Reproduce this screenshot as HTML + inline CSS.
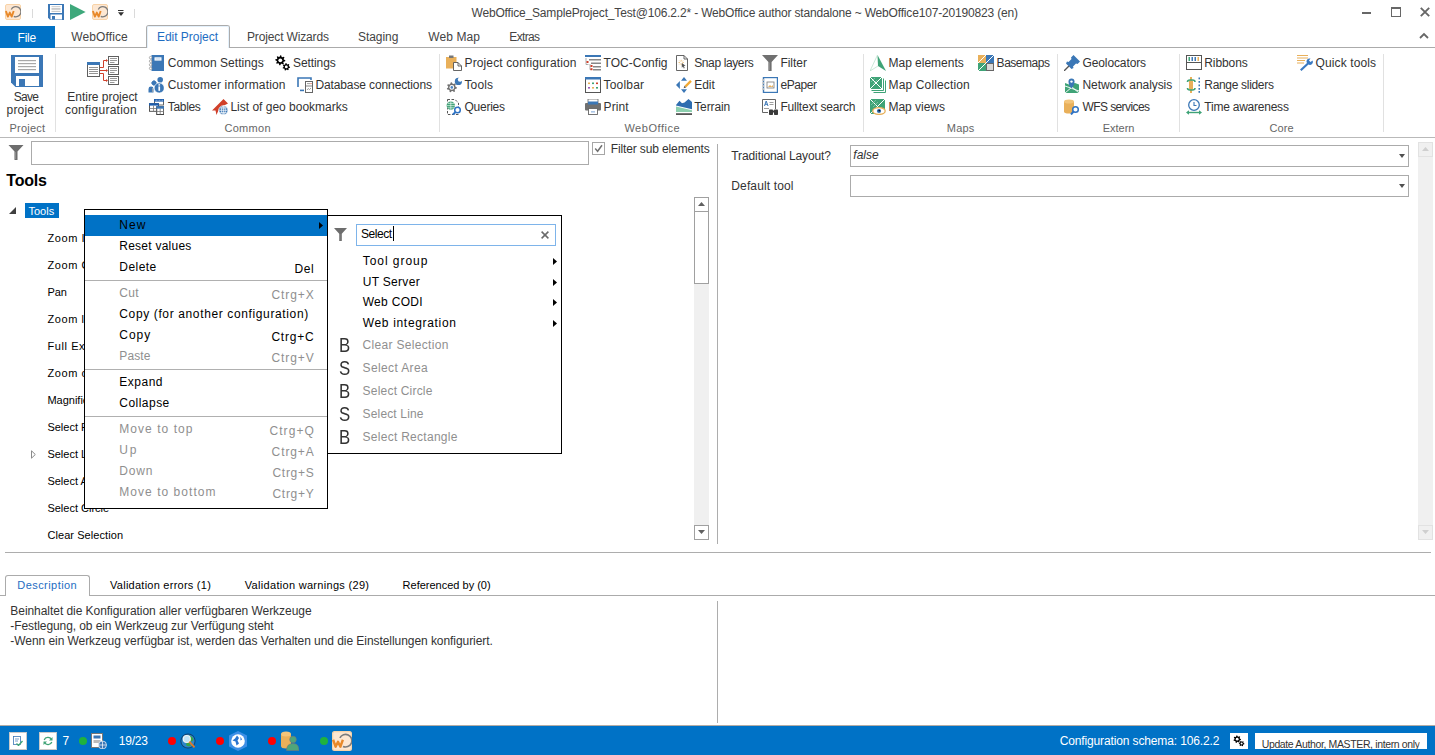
<!DOCTYPE html>
<html><head><meta charset="utf-8"><style>
html,body{margin:0;padding:0;}
body{width:1435px;height:755px;position:relative;overflow:hidden;background:#fff;font-family:'Liberation Sans',sans-serif;}
.a{position:absolute;}
.t{white-space:pre;}
</style></head><body>
<div class="a" style="left:32px;top:9px;width:1px;height:9px;background:#dadada;z-index:0;"></div><div class="a" style="left:134px;top:9px;width:1px;height:9px;background:#dadada;z-index:0;"></div><div class="a" style="left:1362px;top:12px;width:9px;height:2px;background:#676767;z-index:0;"></div><div class="a" style="left:1391px;top:7px;width:10px;height:10px;border:1px solid #676767;box-sizing:border-box;z-index:0;border-top-width:2px;"></div><svg class="a" style="left:1420px;top:7px;z-index:2" width="10" height="10" viewBox="0 0 10 10"><path d="M0.8 0.8L9.2 9.2M9.2 0.8L0.8 9.2" stroke="#676767" stroke-width="1.9"/></svg><svg class="a" style="left:1419px;top:32px;z-index:2" width="10" height="7" viewBox="0 0 10 7"><path d="M1 6L5 2L9 6" stroke="#676767" stroke-width="1.8" fill="none"/></svg><svg class="a" style="left:5px;top:4px;z-index:2" width="16" height="16" viewBox="0 0 16 16"><rect x="0.5" y="0.5" width="15" height="15" rx="1.5" fill="#fde7d2" stroke="#f8d3a8" stroke-width="1"/><path d="M6.31 5.54A5.05 5.05 0 1 1 8.8 12.36" stroke="#7c7c7c" stroke-width="1.3" fill="none"/><path d="M0.9 7L2.9 12.6L4.8 8.6L6.7 12.6L8.7 7" stroke="#e8892a" stroke-width="1.9" fill="none" stroke-linejoin="round"/></svg><svg class="a" style="left:48px;top:4px;z-index:2" width="16" height="16" viewBox="0 0 32 32"><path d="M0 0H32V32H4.5L0 27.5Z" fill="#3b77b6"/><rect x="4" y="2" width="24" height="16" fill="#fff"/><rect x="7" y="5" width="18" height="1.2" fill="#a8a8a8"/><rect x="7" y="8" width="18" height="1.2" fill="#a8a8a8"/><rect x="7" y="11" width="18" height="1.2" fill="#a8a8a8"/><rect x="7" y="14" width="18" height="1.2" fill="#a8a8a8"/><rect x="5" y="21" width="23" height="10" fill="#fff"/><rect x="8" y="24" width="6" height="7" fill="#3b77b6"/></svg><svg class="a" style="left:70px;top:4px;z-index:2" width="16" height="16" viewBox="0 0 16 16"><path d="M0 0L15.6 8L0 16Z" fill="#3ea87b"/></svg><svg class="a" style="left:92px;top:4px;z-index:2" width="16" height="16" viewBox="0 0 16 16"><rect x="0.5" y="0.5" width="15" height="15" rx="1.5" fill="#fde7d2" stroke="#f8d3a8" stroke-width="1"/><path d="M6.31 5.54A5.05 5.05 0 1 1 8.8 12.36" stroke="#7c7c7c" stroke-width="1.3" fill="none"/><path d="M0.9 7L2.9 12.6L4.8 8.6L6.7 12.6L8.7 7" stroke="#e8892a" stroke-width="1.9" fill="none" stroke-linejoin="round"/></svg><svg class="a" style="left:118px;top:10px;z-index:2" width="6" height="7" viewBox="0 0 6 7"><rect x="0" y="0" width="5.5" height="1" fill="#333"/><path d="M0 2.2H6L3 6Z" fill="#333"/></svg><div class="a" style="left:0px;top:26px;width:55px;height:22px;background:#0072c6;z-index:0;"></div><div class="a" style="left:55px;top:47px;width:1380px;height:1px;background:#ababab;z-index:0;"></div><div class="a" style="left:146px;top:25px;width:84px;height:23px;background:#fff;border:1px solid #ababab;box-sizing:border-box;z-index:1;border-bottom:none;border-radius:3px 3px 0 0;"></div><div class="a" style="left:147px;top:26px;width:82px;height:22px;background:#fff;border:1px solid #e3f0fb;box-sizing:border-box;z-index:1;border-bottom:none;border-radius:2px 2px 0 0;"></div><div class="a" style="left:0px;top:137px;width:1435px;height:1px;background:#b9b9b9;z-index:0;"></div><div class="a" style="left:55px;top:54px;width:1px;height:78px;background:#e1e1e1;z-index:0;"></div><div class="a" style="left:439px;top:54px;width:1px;height:78px;background:#e1e1e1;z-index:0;"></div><div class="a" style="left:863px;top:54px;width:1px;height:78px;background:#e1e1e1;z-index:0;"></div><div class="a" style="left:1057px;top:54px;width:1px;height:78px;background:#e1e1e1;z-index:0;"></div><div class="a" style="left:1179px;top:54px;width:1px;height:78px;background:#e1e1e1;z-index:0;"></div><div class="a" style="left:1383px;top:54px;width:1px;height:78px;background:#e1e1e1;z-index:0;"></div><svg class="a" style="left:11px;top:55px;z-index:2" width="32" height="32" viewBox="0 0 32 32"><path d="M0 0H32V32H4.5L0 27.5Z" fill="#3b77b6"/><rect x="4" y="2" width="24" height="16" fill="#fff"/><rect x="7" y="5" width="18" height="1.2" fill="#a8a8a8"/><rect x="7" y="8" width="18" height="1.2" fill="#a8a8a8"/><rect x="7" y="11" width="18" height="1.2" fill="#a8a8a8"/><rect x="7" y="14" width="18" height="1.2" fill="#a8a8a8"/><rect x="5" y="21" width="23" height="10" fill="#fff"/><rect x="8" y="24" width="6" height="7" fill="#3b77b6"/></svg><svg class="a" style="left:84px;top:52px;z-index:2" width="38" height="36" viewBox="0 0 38 36"><rect x="3.5" y="10.5" width="12" height="14" fill="#fff" stroke="#5f5f5f" stroke-width="1"/><rect x="3" y="10" width="13" height="3" fill="#3b77b6"/><rect x="5" y="15" width="9" height="0.9" fill="#8a8a8a"/><rect x="5" y="17" width="9" height="0.9" fill="#8a8a8a"/><rect x="5" y="19" width="9" height="0.9" fill="#8a8a8a"/><rect x="5" y="21" width="9" height="0.9" fill="#8a8a8a"/><rect x="24.5" y="4.5" width="10" height="8" fill="#fff" stroke="#5f5f5f" stroke-width="1"/><rect x="26" y="6" width="7" height="1" fill="#9a9a9a"/><rect x="26" y="8" width="7" height="1" fill="#9a9a9a"/><rect x="26" y="10" width="4.5" height="1" fill="#9a9a9a"/><rect x="24.5" y="14.5" width="10" height="8" fill="#fff" stroke="#5f5f5f" stroke-width="1"/><rect x="26" y="16" width="7" height="1" fill="#9a9a9a"/><rect x="26" y="18" width="7" height="1" fill="#9a9a9a"/><rect x="26" y="20" width="4.5" height="1" fill="#9a9a9a"/><rect x="24.5" y="24.5" width="10" height="8" fill="#fff" stroke="#5f5f5f" stroke-width="1"/><rect x="26" y="26" width="7" height="1" fill="#9a9a9a"/><rect x="26" y="28" width="7" height="1" fill="#9a9a9a"/><rect x="26" y="30" width="4.5" height="1" fill="#9a9a9a"/><path d="M16 15.5H19.5V8.5H23M16 18.5H23M16 21.5H19.5V28.5H23" stroke="#d0402a" stroke-width="1" fill="none"/><path d="M22 7L24 8.5L22 10ZM22 17L24 18.5L22 20ZM22 27L24 28.5L22 30Z" fill="#d0402a"/></svg><svg class="a" style="left:148px;top:55px;z-index:2" width="16" height="16" viewBox="0 0 16 16"><rect x="3.5" y="0" width="12.5" height="16" fill="#3b77b6"/><rect x="6.5" y="2.3" width="7" height="3.3" fill="#fff"/><rect x="7.5" y="3.2" width="5" height="1.5" fill="#cfe0f2"/><circle cx="2.6" cy="2.6" r="1.25" fill="#fff" stroke="#8d8d8d" stroke-width="0.7"/><circle cx="2.6" cy="6.2" r="1.25" fill="#fff" stroke="#8d8d8d" stroke-width="0.7"/><circle cx="2.6" cy="9.8" r="1.25" fill="#fff" stroke="#8d8d8d" stroke-width="0.7"/><circle cx="2.6" cy="13.4" r="1.25" fill="#fff" stroke="#8d8d8d" stroke-width="0.7"/></svg><svg class="a" style="left:148px;top:77px;z-index:2" width="16" height="16" viewBox="0 0 16 16"><circle cx="12.2" cy="2.8" r="2.8" fill="#3b77b6"/><path d="M6 3L9 6L6 9L3 6Z" fill="#3b77b6"/><circle cx="6" cy="6" r="2.3" fill="#3b77b6"/><path d="M0.5 15.5V12Q0.5 9.6 3 9.6Q5.5 9.6 5.5 12V15.5Z" fill="#3b77b6"/><rect x="4.2" y="11" width="0.8" height="4" fill="#aaa"/><circle cx="11.2" cy="11" r="5" fill="#3b77b6" stroke="#fff" stroke-width="0.6"/><rect x="10.4" y="9.4" width="1.7" height="4.4" fill="#fff"/><rect x="10.4" y="7.2" width="1.7" height="1.4" fill="#fff"/></svg><svg class="a" style="left:148px;top:99px;z-index:2" width="16" height="16" viewBox="0 0 16 16"><rect x="6.5" y="0.5" width="9" height="5.5" fill="#fff" stroke="#555" stroke-width="0.9"/><rect x="6" y="0" width="10" height="2.6" fill="#1f5fae"/><path d="M7.5 1.3H9.5M10.5 1.3H12.5M13.5 1.3H15" stroke="#fff" stroke-width="0.5"/><rect x="1.5" y="4.7" width="9" height="7.6" fill="#fff" stroke="#444" stroke-width="0.9"/><rect x="1" y="4.2" width="10" height="2.4" fill="#1f5fae"/><path d="M5.5 6.6V12.3M1.5 9.5H10.5" stroke="#777" stroke-width="0.8"/><rect x="8.7" y="7.7" width="7" height="7.8" fill="#fff" stroke="#444" stroke-width="1"/><rect x="8.2" y="7.2" width="7.8" height="2.5" fill="#3b77b6"/><path d="M12.2 9.7V15.3M8.7 12.5H15.7" stroke="#777" stroke-width="0.8"/></svg><svg class="a" style="left:275px;top:55px;z-index:2" width="16" height="16" viewBox="0 0 16 16"><polygon points="10.30,5.30 10.20,6.28 8.63,6.68 8.29,7.30 8.84,8.84 8.08,9.46 6.68,8.63 6.00,8.83 5.30,10.30 4.32,10.20 3.92,8.63 3.30,8.29 1.76,8.84 1.14,8.08 1.97,6.68 1.77,6.00 0.30,5.30 0.40,4.32 1.97,3.92 2.31,3.30 1.76,1.76 2.52,1.14 3.92,1.97 4.60,1.77 5.30,0.30 6.28,0.40 6.68,1.97 7.30,2.31 8.84,1.76 9.46,2.52 8.63,3.92 8.83,4.60" fill="#000"/><circle cx="5.3" cy="5.3" r="1.90" fill="#fff"/><polygon points="15.10,11.90 15.00,12.75 13.77,13.09 13.44,13.61 13.67,14.87 12.95,15.32 11.91,14.57 11.30,14.64 10.45,15.60 9.65,15.32 9.59,14.04 9.16,13.61 7.88,13.55 7.60,12.75 8.56,11.90 8.63,11.29 7.88,10.25 8.33,9.53 9.59,9.76 10.11,9.43 10.45,8.20 11.30,8.10 11.91,9.23 12.49,9.43 13.67,8.93 14.27,9.53 13.77,10.71 13.97,11.29" fill="#000"/><circle cx="11.3" cy="11.9" r="1.44" fill="#fff"/></svg><svg class="a" style="left:297px;top:77px;z-index:2" width="16" height="16" viewBox="0 0 16 16"><path d="M1 10V1H14V3" stroke="#3b77b6" stroke-width="1.6" fill="none"/><rect x="3" y="12.6" width="4" height="1.6" fill="#3b77b6"/><rect x="8.5" y="4.5" width="7" height="11" fill="#fff" stroke="#666" stroke-width="1"/><path d="M8.5 9H15.5" stroke="#666" stroke-width="0.8"/><rect x="10" y="6.3" width="3" height="0.8" fill="#888"/><circle cx="14" cy="6.6" r="0.6" fill="#d0402a"/><path d="M10 13L11.3 11.5L12.5 12.5L14 11" stroke="#777" stroke-width="0.7" fill="none"/></svg><svg class="a" style="left:212px;top:99px;z-index:2" width="16" height="16" viewBox="0 0 16 16"><path d="M0 11.5L11.5 0L16 4.5L11 7L7 10L4.5 16L3.5 11.5Z" fill="#d0402a"/><circle cx="11.4" cy="11.3" r="4.6" fill="#3b77b6" stroke="#fff" stroke-width="0.8"/><path d="M7.2 11.3H15.6M11.4 6.9V15.7M8.2 9H14.6M8.2 13.6H14.6" stroke="#fff" stroke-width="0.7"/><ellipse cx="11.4" cy="11.3" rx="2" ry="4.3" stroke="#fff" stroke-width="0.7" fill="none"/></svg><svg class="a" style="left:446px;top:55px;z-index:2" width="16" height="16" viewBox="0 0 16 16"><rect x="0" y="2" width="10.5" height="11.5" fill="#e9b05a"/><rect x="3" y="0.5" width="4.5" height="2.5" fill="#777"/><path d="M7.5 7.5H12L15.5 11V15.5H7.5Z" fill="#fff" stroke="#555" stroke-width="0.9"/><path d="M12 7.5V11H15.5" stroke="#555" stroke-width="0.9" fill="none"/></svg><svg class="a" style="left:446px;top:77px;z-index:2" width="16" height="16" viewBox="0 0 16 16"><polygon points="10.90,10.40 10.77,11.53 9.11,11.99 8.67,12.69 8.98,14.39 8.01,14.99 6.62,13.98 5.80,14.07 4.67,15.37 3.59,14.99 3.51,13.27 2.93,12.69 1.21,12.61 0.83,11.53 2.13,10.40 2.22,9.58 1.21,8.19 1.81,7.22 3.51,7.53 4.21,7.09 4.67,5.43 5.80,5.30 6.62,6.82 7.39,7.09 8.98,6.41 9.79,7.22 9.11,8.81 9.38,9.58" fill="#6f6f6f"/><circle cx="5.8" cy="10.4" r="2.40" fill="#fff"/><circle cx="5.8" cy="10.4" r="1.3" fill="#4c84c0"/><circle cx="12.4" cy="4.4" r="3.6" fill="#3b77b6"/><circle cx="14" cy="2.6" r="2.2" fill="#fff"/></svg><svg class="a" style="left:446px;top:99px;z-index:2" width="16" height="16" viewBox="0 0 16 16"><path d="M1.5 0.5H9L12.5 4V15.5H1.5Z" fill="#fff" stroke="#444" stroke-width="0.9" stroke-dasharray="2.5 1.5"/><circle cx="4.8" cy="6.6" r="4.2" fill="#3fa377"/><path d="M0.6 6.6H9M4.8 2.4V10.8M1.4 4.4H8.2M1.4 8.8H8.2" stroke="#fff" stroke-width="0.6"/><circle cx="11.5" cy="11" r="2.8" fill="#fff" stroke="#2f73c4" stroke-width="1.5"/><path d="M9.5 13L6.8 15.7" stroke="#2f73c4" stroke-width="2"/></svg><svg class="a" style="left:585px;top:55px;z-index:2" width="16" height="16" viewBox="0 0 16 16"><rect x="0" y="0" width="16" height="2" fill="#3b77b6"/><rect x="4" y="4" width="12" height="1.5" fill="#888"/><rect x="6" y="7.5" width="10" height="1.5" fill="#888"/><rect x="8" y="11" width="8" height="1.5" fill="#888"/><rect x="8" y="14" width="8" height="1.5" fill="#888"/><path d="M1 3V9.5H3.5M5 9V14.6H7" stroke="#777" stroke-width="0.6" fill="none"/><rect x="1.5" y="6" width="2" height="2" fill="#d0402a"/><rect x="5.5" y="10" width="2" height="2" fill="#d0402a"/><rect x="5.5" y="13.2" width="2" height="2" fill="#d0402a"/></svg><svg class="a" style="left:585px;top:77px;z-index:2" width="16" height="16" viewBox="0 0 16 16"><rect x="0.5" y="0.5" width="15" height="15" fill="#fff" stroke="#555" stroke-width="1"/><rect x="0" y="0" width="16" height="2.5" fill="#3b77b6"/><rect x="3" y="5.5" width="2" height="1.6" fill="#e9b05a"/><rect x="7" y="5.5" width="2" height="1.6" fill="#3fa377"/><rect x="11" y="5.5" width="2" height="1.6" fill="#d0402a"/><rect x="3" y="10" width="2" height="1.6" fill="#9b59b6"/><rect x="7" y="10" width="2" height="1.6" fill="#e9b05a"/><rect x="11" y="10" width="2" height="1.6" fill="#3fa377"/></svg><svg class="a" style="left:585px;top:99px;z-index:2" width="16" height="16" viewBox="0 0 16 16"><rect x="3" y="0" width="10" height="4" fill="#fff" stroke="#666" stroke-width="0.8"/><rect x="0" y="4" width="16" height="7.5" rx="1" fill="#707070"/><rect x="3" y="2.5" width="10" height="3" fill="#3b77b6"/><rect x="3.5" y="9.5" width="9" height="6" fill="#fff" stroke="#666" stroke-width="0.9"/><rect x="6" y="12.5" width="4" height="0.8" fill="#5a8fd0"/></svg><svg class="a" style="left:676px;top:55px;z-index:2" width="16" height="16" viewBox="0 0 16 16"><path d="M0.5 0.5H8L11.5 4V15.5H0.5Z" fill="#fff" stroke="#555" stroke-width="0.9"/><path d="M8 0.5V4H11.5" stroke="#555" stroke-width="0.9" fill="none"/><path d="M5.2 4.8V6.3M5.2 8.7V10.2M2.5 7.5H4M6.4 7.5H7.9M3.3 5.6L4.2 6.5M6.2 8.5L7.1 9.4M3.3 9.4L4.2 8.5M6.2 6.5L7.1 5.6" stroke="#e9b05a" stroke-width="0.7"/><path d="M5.8 8L9.6 10.8L7.9 11.1L8.7 13.1L7.8 13.5L7 11.5L5.8 12.8Z" fill="#555"/></svg><svg class="a" style="left:676px;top:77px;z-index:2" width="16" height="16" viewBox="0 0 16 16"><path d="M5 3.8L8 0L11 3.8Z" fill="#3b77b6"/><path d="M5 12.2L8 16L11 12.2Z" fill="#3b77b6"/><path d="M0 8L3.9 4V12Z" fill="#3b77b6"/><path d="M8.5 8.8L14.2 3.1L15.8 4.7L10.1 10.4Z" fill="#f2a933"/><path d="M8.5 8.8L10.1 10.4L7.6 11.3Z" fill="#555"/></svg><svg class="a" style="left:676px;top:99px;z-index:2" width="16" height="16" viewBox="0 0 16 16"><path d="M0 6L3.5 1.8L6 4.2L8.5 3.5L12.5 0L16 3V10.3L0 6.6Z" fill="#2f6db0"/><path d="M0 7.6L16 11.2V13H0Z" fill="#8ccfae"/><rect x="0" y="14.2" width="16" height="1.8" fill="#555"/></svg><svg class="a" style="left:762px;top:55px;z-index:2" width="16" height="16" viewBox="0 0 16 16"><path d="M0 0H16L9.6 7V16H6.4V7Z" fill="#707070"/><path d="M7.2 7.5V15" stroke="#9a9a9a" stroke-width="0.9"/></svg><svg class="a" style="left:762px;top:77px;z-index:2" width="16" height="16" viewBox="0 0 16 16"><rect x="1.5" y="0.5" width="14" height="15" fill="#fff" stroke="#3b77b6" stroke-width="1.4"/><rect x="5" y="5" width="7" height="6" fill="#fff" stroke="#777" stroke-width="0.8"/><path d="M6 10L8 8L9.5 9.5L11 8V10Z" fill="#e9b05a"/><circle cx="1" cy="3" r="0.9" fill="#fff" stroke="#999" stroke-width="0.5"/><circle cx="1" cy="6" r="0.9" fill="#fff" stroke="#999" stroke-width="0.5"/><circle cx="1" cy="9" r="0.9" fill="#fff" stroke="#999" stroke-width="0.5"/><circle cx="1" cy="12" r="0.9" fill="#fff" stroke="#999" stroke-width="0.5"/></svg><svg class="a" style="left:762px;top:99px;z-index:2" width="16" height="16" viewBox="0 0 16 16"><path d="M0.5 0.5H13.5V10M0.5 0.5V13.5H6" stroke="#555" stroke-width="0.9" fill="#fff"/><path d="M2.5 7L4.2 2L6 7M3.1 5.3H5.3" stroke="#3b77b6" stroke-width="1" fill="none"/><rect x="7.5" y="3" width="4" height="0.8" fill="#888"/><rect x="7.5" y="5" width="4" height="0.8" fill="#888"/><rect x="2" y="9" width="5" height="0.8" fill="#888"/><rect x="7" y="10.5" width="4" height="5.5" rx="0.8" fill="#3a3a3a"/><rect x="12" y="10.5" width="4" height="5.5" rx="0.8" fill="#3a3a3a"/><rect x="10" y="11.5" width="3" height="2" fill="#3a3a3a"/></svg><svg class="a" style="left:870px;top:55px;z-index:2" width="16" height="16" viewBox="0 0 16 16"><path d="M7.5 0L16 16L8 11Z" fill="#3fa377"/><path d="M7.5 0L0 16L8 11" stroke="#a8d8c0" stroke-width="0.6" fill="none"/></svg><svg class="a" style="left:870px;top:77px;z-index:2" width="16" height="16" viewBox="0 0 16 16"><path d="M13.5 1.5V13.5H1.5M15.5 3.5V15.5H3.5" stroke="#3fa377" stroke-width="1" fill="none"/><rect x="0" y="0" width="12" height="12" fill="#3fa377"/><path d="M0 0L12 12M12 0L0 12" stroke="#fff" stroke-width="1"/><path d="M1 5L5 1M3 7L7 3" stroke="#9fd4bb" stroke-width="0.6"/></svg><svg class="a" style="left:870px;top:99px;z-index:2" width="16" height="16" viewBox="0 0 16 16"><rect x="0" y="0" width="15" height="15" fill="#3fa377"/><path d="M0 0L15 15M15 0L0 15" stroke="#fff" stroke-width="1"/><path d="M1 6L6 1M3 8L8 3" stroke="#9fd4bb" stroke-width="0.6"/><ellipse cx="9" cy="12" rx="6.2" ry="3.4" fill="#fff" stroke="#e9b05a" stroke-width="1.3"/><circle cx="9" cy="12" r="2.1" fill="#2f6db0"/><circle cx="9.3" cy="11.6" r="0.9" fill="#111"/></svg><svg class="a" style="left:978px;top:55px;z-index:2" width="16" height="16" viewBox="0 0 16 16"><rect x="0" y="0" width="8" height="8" fill="#e9b05a"/><rect x="8" y="0" width="8" height="8" fill="#3b77b6"/><path d="M0 8H8V16H0Z" fill="#3fa377"/><rect x="8.5" y="8.5" width="7" height="7" fill="#d8d8d8" stroke="#666" stroke-width="1"/><path d="M8 0L0 8M16 0L8 8M8 8L0 16" stroke="#fff" stroke-width="1"/></svg><svg class="a" style="left:1064px;top:55px;z-index:2" width="16" height="16" viewBox="0 0 16 16"><path d="M7 2.5L9.5 0L16 6.5L13.5 9L12 8.5L9 11.5L9.5 13L7.5 14L2 8.5L3 6.5L4.5 7L7.5 4Z" fill="#3b77b6"/><path d="M5 11L0 16" stroke="#555" stroke-width="1.3"/></svg><svg class="a" style="left:1064px;top:77px;z-index:2" width="16" height="16" viewBox="0 0 16 16"><path d="M1 6L5 7.5L11 6L15 7.5V16H1Z" fill="#3fa377"/><path d="M1 16L8 10L15 16M1 9L15 14" stroke="#fff" stroke-width="0.9" fill="none"/><path d="M7.5 11.5C5 8.5 4.5 6.5 4.5 4.5A3 3 0 0 1 10.5 4.5C10.5 6.5 10 8.5 7.5 11.5Z" fill="#3b77b6"/><circle cx="7.5" cy="4.6" r="1.2" fill="#fff"/></svg><svg class="a" style="left:1064px;top:99px;z-index:2" width="16" height="16" viewBox="0 0 16 16"><path d="M0 2.5V12.5A5 2 0 0 0 10 12.5V2.5Z" fill="#e9b05a"/><ellipse cx="5" cy="2.5" rx="5" ry="2" fill="#f3c57c"/><circle cx="11.5" cy="10.5" r="2.8" fill="#fff" stroke="#2f73c4" stroke-width="1.5"/><path d="M9.5 12.5L7 15.5" stroke="#2f73c4" stroke-width="2"/></svg><svg class="a" style="left:1186px;top:55px;z-index:2" width="16" height="16" viewBox="0 0 16 16"><rect x="0.5" y="0.5" width="15" height="14" fill="#fff" stroke="#555" stroke-width="1"/><path d="M0.5 7.5H15.5" stroke="#555" stroke-width="1"/><rect x="2.5" y="2" width="1.5" height="4" fill="#3fa377"/><rect x="5.5" y="2" width="1.5" height="4" fill="#3b77b6"/><rect x="8.5" y="2" width="1.5" height="4" fill="#3b77b6"/><rect x="11.5" y="2" width="1.5" height="4" fill="#e9b05a"/></svg><svg class="a" style="left:1186px;top:77px;z-index:2" width="16" height="16" viewBox="0 0 16 16"><rect x="4" y="0" width="2" height="16" fill="#e9b05a"/><rect x="3" y="3.5" width="4" height="9" fill="#e9b05a"/><path d="M1.5 5Q1.5 3 4 3H6.5Q9 3 9 5M1.5 11Q1.5 13 4 13H6.5Q9 13 9 11" stroke="#3fa377" stroke-width="1.6" fill="none"/><rect x="12.5" y="0.5" width="1.5" height="1.8" fill="#3b77b6"/><rect x="12.5" y="4" width="1.5" height="1.8" fill="#3b77b6"/><rect x="12.5" y="7.5" width="1.5" height="1.8" fill="#3b77b6"/><rect x="12.5" y="11" width="1.5" height="1.8" fill="#3b77b6"/><rect x="12.5" y="14" width="1.5" height="1.8" fill="#3b77b6"/></svg><svg class="a" style="left:1186px;top:99px;z-index:2" width="16" height="16" viewBox="0 0 16 16"><circle cx="8" cy="6" r="5.3" fill="#fff" stroke="#3b77b6" stroke-width="1.3"/><path d="M8 3V6.5H10.5" stroke="#3b77b6" stroke-width="1.1" fill="none"/><path d="M1.5 13.5H14.5" stroke="#3fa377" stroke-width="1.4"/><path d="M0 13.5L3 11.2V15.8ZM16 13.5L13 11.2V15.8Z" fill="#3fa377"/></svg><svg class="a" style="left:1297px;top:55px;z-index:2" width="16" height="16" viewBox="0 0 16 16"><rect x="0" y="0" width="11" height="1" fill="#e9b05a"/><rect x="0" y="2.5" width="11" height="1" fill="#e9b05a"/><rect x="0" y="5" width="8" height="1" fill="#e9b05a"/><rect x="0" y="7.5" width="7" height="1" fill="#e9b05a"/><path d="M3 14.5L10 8A3 3 0 0 1 13.5 3.6L12 5.5L13.5 7L15.5 5.5A3 3 0 0 1 11.5 9.6L4.5 16Z" fill="#3b7ac2"/></svg><svg class="a" style="left:8px;top:145px;z-index:2" width="16" height="15" viewBox="0 0 16 16"><path d="M0 0H16L9.6 7V16H6.4V7Z" fill="#6d6d6d"/><path d="M7.2 7.5V15" stroke="#9a9a9a" stroke-width="0.9"/></svg><div class="a" style="left:31px;top:141px;width:558px;height:24px;background:#fff;border:1px solid #ababab;box-sizing:border-box;z-index:0;"></div><div class="a" style="left:592px;top:142px;width:13px;height:13px;background:#fff;border:1px solid #a6a6a6;box-sizing:border-box;z-index:0;"></div><svg class="a" style="left:594px;top:144px;z-index:2" width="9" height="9" viewBox="0 0 9 9"><path d="M1.2 4.6L3.6 7.2L8 1.2" stroke="#707070" stroke-width="1.5" fill="none"/></svg><svg class="a" style="left:9px;top:207px;z-index:2" width="7" height="7" viewBox="0 0 7 7"><path d="M7 0L7 7L0 7Z" fill="#404040"/></svg><div class="a" style="left:25px;top:203px;width:34px;height:15px;background:#0072c6;z-index:0;"></div><svg class="a" style="left:31px;top:450px;z-index:2" width="5" height="9" viewBox="0 0 5 9"><path d="M0.5 0.8L4.3 4.5L0.5 8.2Z" fill="none" stroke="#8a8a8a" stroke-width="1"/></svg><div class="a" style="left:694px;top:197px;width:15px;height:343px;background:#f0f0f0;z-index:0;"></div><div class="a" style="left:694px;top:197px;width:15px;height:15px;background:#fff;border:1px solid #a0a0a0;box-sizing:border-box;z-index:0;"></div><svg class="a" style="left:698px;top:202px;z-index:2" width="7" height="4" viewBox="0 0 7 4"><path d="M0 4L3.5 0L7 4Z" fill="#606060"/></svg><div class="a" style="left:694px;top:211px;width:15px;height:73px;background:#fff;border:1px solid #a0a0a0;box-sizing:border-box;z-index:0;"></div><div class="a" style="left:694px;top:525px;width:15px;height:15px;background:#fff;border:1px solid #a0a0a0;box-sizing:border-box;z-index:0;"></div><svg class="a" style="left:698px;top:530px;z-index:2" width="7" height="4" viewBox="0 0 7 4"><path d="M0 0L3.5 4L7 0Z" fill="#606060"/></svg><div class="a" style="left:717px;top:144px;width:1px;height:400px;background:#adadad;z-index:0;"></div><div class="a" style="left:850px;top:145px;width:559px;height:22px;background:#fff;border:1px solid #ababab;box-sizing:border-box;z-index:0;"></div><div class="a" style="left:850px;top:175px;width:559px;height:22px;background:#fff;border:1px solid #ababab;box-sizing:border-box;z-index:0;"></div><svg class="a" style="left:1399px;top:154px;z-index:2" width="6" height="4" viewBox="0 0 6 4"><path d="M0 0L6 0L3 4Z" fill="#505050"/></svg><svg class="a" style="left:1399px;top:184px;z-index:2" width="6" height="4" viewBox="0 0 6 4"><path d="M0 0L6 0L3 4Z" fill="#505050"/></svg><div class="a" style="left:1418px;top:142px;width:15px;height:398px;background:#f0f0f0;z-index:0;"></div><div class="a" style="left:1418px;top:142px;width:15px;height:15px;background:#f0f0f0;border:1px solid #e2e2e2;box-sizing:border-box;z-index:0;"></div><svg class="a" style="left:1422px;top:147px;z-index:2" width="7" height="4" viewBox="0 0 7 4"><path d="M0 4L3.5 0L7 4Z" fill="#cfcfcf"/></svg><div class="a" style="left:1418px;top:525px;width:15px;height:15px;background:#f0f0f0;border:1px solid #e2e2e2;box-sizing:border-box;z-index:0;"></div><svg class="a" style="left:1422px;top:530px;z-index:2" width="7" height="4" viewBox="0 0 7 4"><path d="M0 0L3.5 4L7 0Z" fill="#cfcfcf"/></svg><div class="a" style="left:5px;top:552px;width:1426px;height:1px;background:#adadad;z-index:0;"></div><div class="a" style="left:0px;top:595px;width:1435px;height:1px;background:#ababab;z-index:0;"></div><div class="a" style="left:5px;top:575px;width:85px;height:21px;background:#fff;border:1px solid #ababab;box-sizing:border-box;z-index:1;border-bottom:none;border-radius:3px 3px 0 0;"></div><div class="a" style="left:717px;top:601px;width:1px;height:122px;background:#adadad;z-index:0;"></div><div class="a" style="left:0px;top:725px;width:1435px;height:1px;background:#b3aca6;z-index:0;"></div><div class="a" style="left:0px;top:726px;width:1435px;height:29px;background:#0072c6;z-index:0;"></div><div class="a" style="left:1230px;top:733px;width:18px;height:16px;background:#fff;z-index:1;"></div><div class="a" style="left:1255px;top:733px;width:172px;height:16px;background:#fff;z-index:1;overflow:hidden;"></div><div class="a" style="left:9px;top:732px;width:18px;height:18px;background:#fff;border:1px solid #c9c9c9;box-sizing:border-box;z-index:1;"></div><svg class="a" style="left:13px;top:736px;z-index:2" width="10" height="10" viewBox="0 0 10 10"><rect x="0.5" y="0.5" width="7" height="8" fill="#fff" stroke="#3b77b6" stroke-width="0.8"/><path d="M2 3H6M2 5H5" stroke="#3b77b6" stroke-width="0.7"/><path d="M3.5 7.5L5.5 9.5L9.5 5" stroke="#3fa377" stroke-width="1.3" fill="none"/></svg><div class="a" style="left:39px;top:732px;width:18px;height:18px;background:#fff;border:1px solid #c9c9c9;box-sizing:border-box;z-index:1;"></div><svg class="a" style="left:43px;top:736px;z-index:2" width="10" height="10" viewBox="0 0 10 10"><path d="M8.5 3.5A4 4 0 0 0 1.2 4M1.5 6.5A4 4 0 0 0 8.8 6" stroke="#3fa377" stroke-width="1.3" fill="none"/><path d="M9.5 1V4.5H6Z" fill="#3fa377"/><path d="M0.5 9V5.5H4Z" fill="#3fa377"/></svg><svg class="a" style="left:79px;top:737px;z-index:2" width="8" height="8" viewBox="0 0 8 8"><circle cx="4" cy="4" r="4" fill="#1fb23d"/></svg><svg class="a" style="left:91px;top:733px;z-index:2" width="16" height="16" viewBox="0 0 16 16"><rect x="0.5" y="0.5" width="11" height="14" fill="#fff" stroke="#777" stroke-width="1"/><rect x="2.5" y="2.5" width="7" height="3" fill="#3b77b6"/><rect x="2.5" y="7" width="7" height="3" fill="#bbb"/><circle cx="11.5" cy="12" r="4" fill="#3b77b6" stroke="#fff" stroke-width="0.7"/><path d="M7.8 12H15.2M11.5 8.2V15.8" stroke="#fff" stroke-width="0.7"/></svg><svg class="a" style="left:168px;top:737px;z-index:2" width="8" height="8" viewBox="0 0 8 8"><circle cx="4" cy="4" r="4" fill="#ff0000"/></svg><svg class="a" style="left:216px;top:737px;z-index:2" width="8" height="8" viewBox="0 0 8 8"><circle cx="4" cy="4" r="4" fill="#ff0000"/></svg><svg class="a" style="left:268px;top:737px;z-index:2" width="8" height="8" viewBox="0 0 8 8"><circle cx="4" cy="4" r="4" fill="#ff0000"/></svg><svg class="a" style="left:320px;top:737px;z-index:2" width="8" height="8" viewBox="0 0 8 8"><circle cx="4" cy="4" r="4" fill="#1fb23d"/></svg><svg class="a" style="left:180px;top:733px;z-index:2" width="16" height="16" viewBox="0 0 16 16"><circle cx="8" cy="8" r="7.6" fill="#12406e"/><circle cx="8" cy="8" r="6.6" fill="#2e86c8"/><path d="M9 2.5Q13 3 13.5 7Q12 9 10 8.5Q9 11 11 13Q8 14 6 12Z" fill="#3aa544"/><circle cx="6.8" cy="6" r="3.5" fill="#bfe3f7" stroke="#f2f2f2" stroke-width="1.2"/><path d="M9.3 8.6L14.5 14.3" stroke="#e07b2a" stroke-width="1.9"/></svg><svg class="a" style="left:229px;top:731px;z-index:2" width="18" height="20" viewBox="0 0 18 20"><path d="M9 0L18 4.5V15.5L9 20L0 15.5V4.5Z" fill="#3d8fe6"/><circle cx="9" cy="10" r="6.8" fill="#fff"/><path d="M8 4.5L6 7.5L3.5 9.5L6.5 10.5L7.5 14.5L10 12.5L8.5 9.5L10 7ZM11.5 5.5L13 8.5L11.5 9.5Z" fill="#2a75d0"/></svg><svg class="a" style="left:281px;top:731px;z-index:2" width="18" height="20" viewBox="0 0 18 20"><path d="M0 3V15A5 2.5 0 0 0 10 15V3Z" fill="#e9b05a"/><ellipse cx="5" cy="3" rx="5" ry="2.5" fill="#f2c47a"/><circle cx="12" cy="8.5" r="3.3" fill="#4fa57a" stroke="#777" stroke-width="0.6"/><path d="M5.5 19.5Q5.5 12.5 12 12.5Q18 12.5 18 19.5Z" fill="#4fa57a" stroke="#777" stroke-width="0.6"/></svg><svg class="a" style="left:332px;top:731px;z-index:2" width="20" height="20" viewBox="0 0 16 16"><rect x="0.5" y="0.5" width="15" height="15" rx="1.5" fill="#fde7d2" stroke="#f8d3a8" stroke-width="1"/><path d="M6.31 5.54A5.05 5.05 0 1 1 8.8 12.36" stroke="#7c7c7c" stroke-width="1.3" fill="none"/><path d="M0.9 7L2.9 12.6L4.8 8.6L6.7 12.6L8.7 7" stroke="#e8892a" stroke-width="1.9" fill="none" stroke-linejoin="round"/></svg><svg class="a" style="left:1233px;top:735px;z-index:2" width="12" height="12" viewBox="0 0 12 12"><polygon points="8.00,4.20 7.90,5.05 6.67,5.39 6.34,5.91 6.57,7.17 5.85,7.62 4.81,6.87 4.20,6.94 3.35,7.90 2.55,7.62 2.49,6.34 2.06,5.91 0.78,5.85 0.50,5.05 1.46,4.20 1.53,3.59 0.78,2.55 1.23,1.83 2.49,2.06 3.01,1.73 3.35,0.50 4.20,0.40 4.81,1.53 5.39,1.73 6.57,1.23 7.17,1.83 6.67,3.01 6.87,3.59" fill="#000"/><circle cx="4.2" cy="4.2" r="1.40" fill="#fff"/><polygon points="11.40,8.60 11.30,9.32 10.35,9.61 10.03,10.03 10.00,11.02 9.32,11.30 8.60,10.62 8.08,10.55 7.20,11.02 6.62,10.58 6.85,9.61 6.65,9.12 5.80,8.60 5.90,7.88 6.85,7.59 7.17,7.17 7.20,6.18 7.88,5.90 8.60,6.58 9.12,6.65 10.00,6.18 10.58,6.62 10.35,7.59 10.55,8.08" fill="#000"/><circle cx="8.6" cy="8.6" r="1.00" fill="#fff"/></svg><div class="a" style="left:84px;top:209px;width:244px;height:300px;background:#fff;border:1px solid #000;box-sizing:border-box;z-index:10;"></div><div class="a" style="left:85px;top:215px;width:242px;height:21px;background:#0072c6;z-index:10;"></div><svg class="a" style="left:319px;top:222px;z-index:11" width="4" height="7" viewBox="0 0 4 7"><path d="M0 0L4 3.5L0 7Z" fill="#000"/></svg><div class="a" style="left:85px;top:280px;width:242px;height:1px;background:#b0b0b0;z-index:10;"></div><div class="a" style="left:85px;top:369px;width:242px;height:1px;background:#b0b0b0;z-index:10;"></div><div class="a" style="left:85px;top:416px;width:242px;height:1px;background:#b0b0b0;z-index:10;"></div><div class="a" style="left:327px;top:215px;width:235px;height:239px;background:#fff;border:1px solid #000;box-sizing:border-box;z-index:12;"></div><svg class="a" style="left:334px;top:228px;z-index:13" width="13" height="13" viewBox="0 0 16 16"><path d="M0 0H16L9.6 7V16H6.4V7Z" fill="#6d6d6d"/><path d="M7.2 7.5V15" stroke="#9a9a9a" stroke-width="0.9"/></svg><div class="a" style="left:356px;top:224px;width:200px;height:22px;background:#fff;border:1px solid #7eb4ea;box-sizing:border-box;z-index:13;"></div><div class="a" style="left:393px;top:226px;width:1px;height:15px;background:#000;z-index:14;"></div><svg class="a" style="left:541px;top:231px;z-index:14" width="8" height="8" viewBox="0 0 8 8"><path d="M0.6 0.6L7.4 7.4M7.4 0.6L0.6 7.4" stroke="#6a6a6a" stroke-width="1.5"/></svg><svg class="a" style="left:553px;top:258px;z-index:14" width="4" height="7" viewBox="0 0 4 7"><path d="M0 0L4 3.5L0 7Z" fill="#000"/></svg><svg class="a" style="left:553px;top:279px;z-index:14" width="4" height="7" viewBox="0 0 4 7"><path d="M0 0L4 3.5L0 7Z" fill="#000"/></svg><svg class="a" style="left:553px;top:299px;z-index:14" width="4" height="7" viewBox="0 0 4 7"><path d="M0 0L4 3.5L0 7Z" fill="#000"/></svg><svg class="a" style="left:553px;top:320px;z-index:14" width="4" height="7" viewBox="0 0 4 7"><path d="M0 0L4 3.5L0 7Z" fill="#000"/></svg>
<div class="a t" style="left:471.50px;top:5px;font-size:12px;line-height:16px;color:#444;letter-spacing:-0.172px;z-index:1;">WebOffice_SampleProject_Test@106.2.2* - WebOffice author standalone ~ WebOffice107-20190823 (en)</div><div class="a t" style="left:17.60px;top:30px;font-size:12px;line-height:16px;color:#fff;letter-spacing:-0.248px;z-index:3;">File</div><div class="a t" style="left:71.20px;top:29px;font-size:12px;line-height:16px;color:#444444;letter-spacing:0.126px;z-index:1;">WebOffice</div><div class="a t" style="left:157.00px;top:29px;font-size:12px;line-height:16px;color:#1e6dc2;letter-spacing:-0.033px;z-index:3;">Edit Project</div><div class="a t" style="left:247.00px;top:29px;font-size:12px;line-height:16px;color:#444444;letter-spacing:-0.145px;z-index:1;">Project Wizards</div><div class="a t" style="left:358.00px;top:29px;font-size:12px;line-height:16px;color:#444444;letter-spacing:-0.051px;z-index:1;">Staging</div><div class="a t" style="left:428.20px;top:29px;font-size:12px;line-height:16px;color:#444444;letter-spacing:0.110px;z-index:1;">Web Map</div><div class="a t" style="left:509.30px;top:29px;font-size:12px;line-height:16px;color:#444444;letter-spacing:-0.663px;z-index:1;">Extras</div><div class="a t" style="left:9.50px;top:120px;font-size:11px;line-height:16px;color:#666666;letter-spacing:0.208px;z-index:1;">Project</div><div class="a t" style="left:224.40px;top:120px;font-size:11px;line-height:16px;color:#666666;letter-spacing:0.315px;z-index:1;">Common</div><div class="a t" style="left:624.40px;top:120px;font-size:11px;line-height:16px;color:#666666;letter-spacing:0.543px;z-index:1;">WebOffice</div><div class="a t" style="left:946.80px;top:120px;font-size:11px;line-height:16px;color:#666666;letter-spacing:0.198px;z-index:1;">Maps</div><div class="a t" style="left:1102.70px;top:120px;font-size:11px;line-height:16px;color:#666666;z-index:1;">Extern</div><div class="a t" style="left:1269.50px;top:120px;font-size:11px;line-height:16px;color:#666666;letter-spacing:0.052px;z-index:1;">Core</div><div class="a t" style="left:13.80px;top:89px;font-size:12px;line-height:16px;color:#333333;letter-spacing:-0.720px;z-index:1;">Save</div><div class="a t" style="left:6.60px;top:102px;font-size:12px;line-height:16px;color:#333333;letter-spacing:0.178px;z-index:1;">project</div><div class="a t" style="left:67.30px;top:89px;font-size:12px;line-height:16px;color:#333333;letter-spacing:-0.023px;z-index:1;">Entire project</div><div class="a t" style="left:64.90px;top:102px;font-size:12px;line-height:16px;color:#333333;letter-spacing:0.257px;z-index:1;">configuration</div><div class="a t" style="left:167.80px;top:55px;font-size:12px;line-height:16px;color:#333333;letter-spacing:0.037px;z-index:1;">Common Settings</div><div class="a t" style="left:167.80px;top:77px;font-size:12px;line-height:16px;color:#333333;letter-spacing:0.157px;z-index:1;">Customer information</div><div class="a t" style="left:167.80px;top:99px;font-size:12px;line-height:16px;color:#333333;letter-spacing:-0.338px;z-index:1;">Tables</div><div class="a t" style="left:293.00px;top:55px;font-size:12px;line-height:16px;color:#333333;letter-spacing:-0.080px;z-index:1;">Settings</div><div class="a t" style="left:315.40px;top:77px;font-size:12px;line-height:16px;color:#333333;letter-spacing:-0.113px;z-index:1;">Database connections</div><div class="a t" style="left:230.40px;top:99px;font-size:12px;line-height:16px;color:#333333;z-index:1;">List of geo bookmarks</div><div class="a t" style="left:464.50px;top:55px;font-size:12px;line-height:16px;color:#333333;letter-spacing:0.130px;z-index:1;">Project configuration</div><div class="a t" style="left:464.50px;top:77px;font-size:12px;line-height:16px;color:#333333;letter-spacing:0.121px;z-index:1;">Tools</div><div class="a t" style="left:464.50px;top:99px;font-size:12px;line-height:16px;color:#333333;letter-spacing:-0.255px;z-index:1;">Queries</div><div class="a t" style="left:603.50px;top:55px;font-size:12px;line-height:16px;color:#333333;letter-spacing:0.023px;z-index:1;">TOC-Config</div><div class="a t" style="left:603.50px;top:77px;font-size:12px;line-height:16px;color:#333333;letter-spacing:0.190px;z-index:1;">Toolbar</div><div class="a t" style="left:603.50px;top:99px;font-size:12px;line-height:16px;color:#333333;letter-spacing:0.128px;z-index:1;">Print</div><div class="a t" style="left:694.20px;top:55px;font-size:12px;line-height:16px;color:#333333;letter-spacing:-0.378px;z-index:1;">Snap layers</div><div class="a t" style="left:694.20px;top:77px;font-size:12px;line-height:16px;color:#333333;z-index:1;">Edit</div><div class="a t" style="left:694.20px;top:99px;font-size:12px;line-height:16px;color:#333333;letter-spacing:-0.115px;z-index:1;">Terrain</div><div class="a t" style="left:780.40px;top:55px;font-size:12px;line-height:16px;color:#333333;letter-spacing:-0.014px;z-index:1;">Filter</div><div class="a t" style="left:780.40px;top:77px;font-size:12px;line-height:16px;color:#333333;letter-spacing:-0.421px;z-index:1;">ePaper</div><div class="a t" style="left:780.40px;top:99px;font-size:12px;line-height:16px;color:#333333;letter-spacing:-0.217px;z-index:1;">Fulltext search</div><div class="a t" style="left:888.50px;top:55px;font-size:12px;line-height:16px;color:#333333;letter-spacing:-0.016px;z-index:1;">Map elements</div><div class="a t" style="left:888.50px;top:77px;font-size:12px;line-height:16px;color:#333333;letter-spacing:0.148px;z-index:1;">Map Collection</div><div class="a t" style="left:888.50px;top:99px;font-size:12px;line-height:16px;color:#333333;letter-spacing:-0.036px;z-index:1;">Map views</div><div class="a t" style="left:996.60px;top:55px;font-size:12px;line-height:16px;color:#333333;letter-spacing:-0.472px;z-index:1;">Basemaps</div><div class="a t" style="left:1082.50px;top:55px;font-size:12px;line-height:16px;color:#333333;letter-spacing:-0.110px;z-index:1;">Geolocators</div><div class="a t" style="left:1082.50px;top:77px;font-size:12px;line-height:16px;color:#333333;letter-spacing:-0.067px;z-index:1;">Network analysis</div><div class="a t" style="left:1082.50px;top:99px;font-size:12px;line-height:16px;color:#333333;letter-spacing:-0.592px;z-index:1;">WFS services</div><div class="a t" style="left:1204.30px;top:55px;font-size:12px;line-height:16px;color:#333333;letter-spacing:-0.089px;z-index:1;">Ribbons</div><div class="a t" style="left:1204.30px;top:77px;font-size:12px;line-height:16px;color:#333333;letter-spacing:-0.315px;z-index:1;">Range sliders</div><div class="a t" style="left:1204.30px;top:99px;font-size:12px;line-height:16px;color:#333333;letter-spacing:-0.230px;z-index:1;">Time awareness</div><div class="a t" style="left:1315.50px;top:55px;font-size:12px;line-height:16px;color:#333333;letter-spacing:0.114px;z-index:1;">Quick tools</div><div class="a t" style="left:610.80px;top:141px;font-size:12px;line-height:16px;color:#333333;letter-spacing:-0.132px;z-index:1;">Filter sub elements</div><div class="a t" style="left:6.30px;top:173px;font-size:16px;line-height:16px;color:#000;font-weight:bold;letter-spacing:-0.196px;z-index:1;">Tools</div><div class="a t" style="left:28.40px;top:203px;font-size:11px;line-height:16px;color:#fff;letter-spacing:0.053px;z-index:2;">Tools</div><div class="a t" style="left:47.40px;top:230px;font-size:11px;line-height:16px;color:#000;z-index:1;letter-spacing:0.6px;">Zoom In</div><div class="a t" style="left:47.40px;top:257px;font-size:11px;line-height:16px;color:#000;z-index:1;letter-spacing:0.6px;">Zoom Out</div><div class="a t" style="left:47.40px;top:284px;font-size:11px;line-height:16px;color:#000;z-index:1;">Pan</div><div class="a t" style="left:47.40px;top:311px;font-size:11px;line-height:16px;color:#000;z-index:1;letter-spacing:0.6px;">Zoom last</div><div class="a t" style="left:47.40px;top:338px;font-size:11px;line-height:16px;color:#000;z-index:1;letter-spacing:0.6px;">Full Extent</div><div class="a t" style="left:47.40px;top:365px;font-size:11px;line-height:16px;color:#000;z-index:1;letter-spacing:0.6px;">Zoom on selection</div><div class="a t" style="left:47.40px;top:392px;font-size:11px;line-height:16px;color:#000;z-index:1;">Magnifier</div><div class="a t" style="left:47.40px;top:419px;font-size:11px;line-height:16px;color:#000;z-index:1;">Select Rectangle</div><div class="a t" style="left:47.40px;top:446px;font-size:11px;line-height:16px;color:#000;z-index:1;">Select Line</div><div class="a t" style="left:47.40px;top:473px;font-size:11px;line-height:16px;color:#000;z-index:1;">Select Area</div><div class="a t" style="left:47.40px;top:500px;font-size:11px;line-height:16px;color:#000;z-index:1;">Select Circle</div><div class="a t" style="left:47.40px;top:527px;font-size:11px;line-height:16px;color:#000;letter-spacing:0.079px;z-index:1;">Clear Selection</div><div class="a t" style="left:731.30px;top:148px;font-size:12px;line-height:16px;color:#333333;letter-spacing:-0.107px;z-index:1;">Traditional Layout?</div><div class="a t" style="left:731.30px;top:178px;font-size:12px;line-height:16px;color:#333333;letter-spacing:0.127px;z-index:1;">Default tool</div><div class="a t" style="left:853.30px;top:147px;font-size:12px;line-height:16px;color:#333333;font-style:italic;letter-spacing:0.010px;z-index:1;">false</div><div class="a t" style="left:17.30px;top:577px;font-size:11px;line-height:16px;color:#1e6dc2;letter-spacing:0.437px;z-index:2;">Description</div><div class="a t" style="left:110.10px;top:577px;font-size:11px;line-height:16px;color:#000;letter-spacing:0.246px;z-index:1;">Validation errors (1)</div><div class="a t" style="left:244.80px;top:577px;font-size:11px;line-height:16px;color:#000;letter-spacing:0.304px;z-index:1;">Validation warnings (29)</div><div class="a t" style="left:402.60px;top:577px;font-size:11px;line-height:16px;color:#000;z-index:1;">Referenced by (0)</div><div class="a t" style="left:10.30px;top:603px;font-size:12px;line-height:16px;color:#333;letter-spacing:-0.049px;z-index:1;">Beinhaltet die Konfiguration aller verfügbaren Werkzeuge</div><div class="a t" style="left:10.30px;top:618px;font-size:12px;line-height:16px;color:#333;letter-spacing:-0.083px;z-index:1;">-Festlegung, ob ein Werkzeug zur Verfügung steht</div><div class="a t" style="left:10.30px;top:633px;font-size:12px;line-height:16px;color:#333;letter-spacing:-0.059px;z-index:1;">-Wenn ein Werkzeug verfügbar ist, werden das Verhalten und die Einstellungen konfiguriert.</div><div class="a t" style="left:62.40px;top:733px;font-size:12px;line-height:16px;color:#fff;z-index:2;">7</div><div class="a t" style="left:118.80px;top:733px;font-size:12px;line-height:16px;color:#fff;letter-spacing:-0.208px;z-index:2;">19/23</div><div class="a t" style="left:1059.70px;top:733px;font-size:12px;line-height:16px;color:#fff;letter-spacing:-0.133px;z-index:2;">Configuration schema: 106.2.2</div><div class="a t" style="left:1261.70px;top:736px;font-size:10.5px;line-height:16px;color:#333;letter-spacing:-0.367px;z-index:2;clip-path:inset(0 0 3px 0);">Update Author, MASTER, intern only</div><div class="a t" style="left:119.30px;top:217px;font-size:12px;line-height:16px;color:#000;letter-spacing:1.042px;z-index:11;">New</div><div class="a t" style="left:119.30px;top:238px;font-size:12px;line-height:16px;color:#000;letter-spacing:0.239px;z-index:11;">Reset values</div><div class="a t" style="left:119.30px;top:259px;font-size:12px;line-height:16px;color:#000;letter-spacing:0.442px;z-index:11;">Delete</div><div class="a t" style="left:294.60px;top:261px;font-size:12px;line-height:16px;color:#000;letter-spacing:0.592px;z-index:11;">Del</div><div class="a t" style="left:119.30px;top:285px;font-size:12px;line-height:16px;color:#8f8f8f;letter-spacing:0.356px;z-index:11;">Cut</div><div class="a t" style="left:271.40px;top:287px;font-size:12px;line-height:16px;color:#8f8f8f;letter-spacing:0.943px;z-index:11;">Ctrg+X</div><div class="a t" style="left:119.30px;top:306px;font-size:12px;line-height:16px;color:#000;letter-spacing:0.628px;z-index:11;">Copy (for another configuration)</div><div class="a t" style="left:119.30px;top:327px;font-size:12px;line-height:16px;color:#000;letter-spacing:0.961px;z-index:11;">Copy</div><div class="a t" style="left:271.40px;top:329px;font-size:12px;line-height:16px;color:#000;letter-spacing:0.811px;z-index:11;">Ctrg+C</div><div class="a t" style="left:119.30px;top:348px;font-size:12px;line-height:16px;color:#8f8f8f;letter-spacing:0.128px;z-index:11;">Paste</div><div class="a t" style="left:271.40px;top:350px;font-size:12px;line-height:16px;color:#8f8f8f;letter-spacing:0.943px;z-index:11;">Ctrg+V</div><div class="a t" style="left:119.30px;top:374px;font-size:12px;line-height:16px;color:#000;letter-spacing:0.499px;z-index:11;">Expand</div><div class="a t" style="left:119.30px;top:395px;font-size:12px;line-height:16px;color:#000;letter-spacing:0.471px;z-index:11;">Collapse</div><div class="a t" style="left:119.30px;top:421px;font-size:12px;line-height:16px;color:#8f8f8f;letter-spacing:1.050px;z-index:11;">Move to top</div><div class="a t" style="left:269.50px;top:423px;font-size:12px;line-height:16px;color:#8f8f8f;letter-spacing:1.057px;z-index:11;">Ctrg+Q</div><div class="a t" style="left:119.30px;top:442px;font-size:12px;line-height:16px;color:#8f8f8f;letter-spacing:1.856px;z-index:11;">Up</div><div class="a t" style="left:271.60px;top:444px;font-size:12px;line-height:16px;color:#8f8f8f;letter-spacing:0.902px;z-index:11;">Ctrg+A</div><div class="a t" style="left:119.30px;top:463px;font-size:12px;line-height:16px;color:#8f8f8f;letter-spacing:0.838px;z-index:11;">Down</div><div class="a t" style="left:272.40px;top:465px;font-size:12px;line-height:16px;color:#8f8f8f;letter-spacing:0.743px;z-index:11;">Ctrg+S</div><div class="a t" style="left:119.30px;top:484px;font-size:12px;line-height:16px;color:#8f8f8f;letter-spacing:1.037px;z-index:11;">Move to bottom</div><div class="a t" style="left:272.40px;top:486px;font-size:12px;line-height:16px;color:#8f8f8f;letter-spacing:0.743px;z-index:11;">Ctrg+Y</div><div class="a t" style="left:361.00px;top:226px;font-size:12px;line-height:16px;color:#000;letter-spacing:-0.472px;z-index:14;">Select</div><div class="a t" style="left:362.70px;top:253px;font-size:12px;line-height:16px;color:#000;letter-spacing:0.961px;z-index:14;">Tool group</div><div class="a t" style="left:362.70px;top:274px;font-size:12px;line-height:16px;color:#000;letter-spacing:0.316px;z-index:14;">UT Server</div><div class="a t" style="left:362.70px;top:294px;font-size:12px;line-height:16px;color:#000;letter-spacing:0.300px;z-index:14;">Web CODI</div><div class="a t" style="left:362.70px;top:315px;font-size:12px;line-height:16px;color:#000;letter-spacing:0.675px;z-index:14;">Web integration</div><div class="a t" style="left:362.60px;top:337px;font-size:12px;line-height:16px;color:#8f8f8f;letter-spacing:0.316px;z-index:14;">Clear Selection</div><div class="a t" style="left:338.50px;top:337px;font-size:21px;line-height:16px;color:#333;z-index:14;filter:blur(0.7px);transform:scaleX(0.8);transform-origin:0 0;">B</div><div class="a t" style="left:362.60px;top:360px;font-size:12px;line-height:16px;color:#8f8f8f;letter-spacing:0.362px;z-index:14;">Select Area</div><div class="a t" style="left:338.50px;top:360px;font-size:21px;line-height:16px;color:#333;z-index:14;filter:blur(0.7px);transform:scaleX(0.8);transform-origin:0 0;">S</div><div class="a t" style="left:362.60px;top:383px;font-size:12px;line-height:16px;color:#8f8f8f;letter-spacing:0.203px;z-index:14;">Select Circle</div><div class="a t" style="left:338.50px;top:383px;font-size:21px;line-height:16px;color:#333;z-index:14;filter:blur(0.7px);transform:scaleX(0.8);transform-origin:0 0;">B</div><div class="a t" style="left:362.60px;top:406px;font-size:12px;line-height:16px;color:#8f8f8f;letter-spacing:0.152px;z-index:14;">Select Line</div><div class="a t" style="left:338.50px;top:406px;font-size:21px;line-height:16px;color:#333;z-index:14;filter:blur(0.7px);transform:scaleX(0.8);transform-origin:0 0;">S</div><div class="a t" style="left:362.60px;top:429px;font-size:12px;line-height:16px;color:#8f8f8f;letter-spacing:0.271px;z-index:14;">Select Rectangle</div><div class="a t" style="left:338.50px;top:429px;font-size:21px;line-height:16px;color:#333;z-index:14;filter:blur(0.7px);transform:scaleX(0.8);transform-origin:0 0;">B</div>
</body></html>
